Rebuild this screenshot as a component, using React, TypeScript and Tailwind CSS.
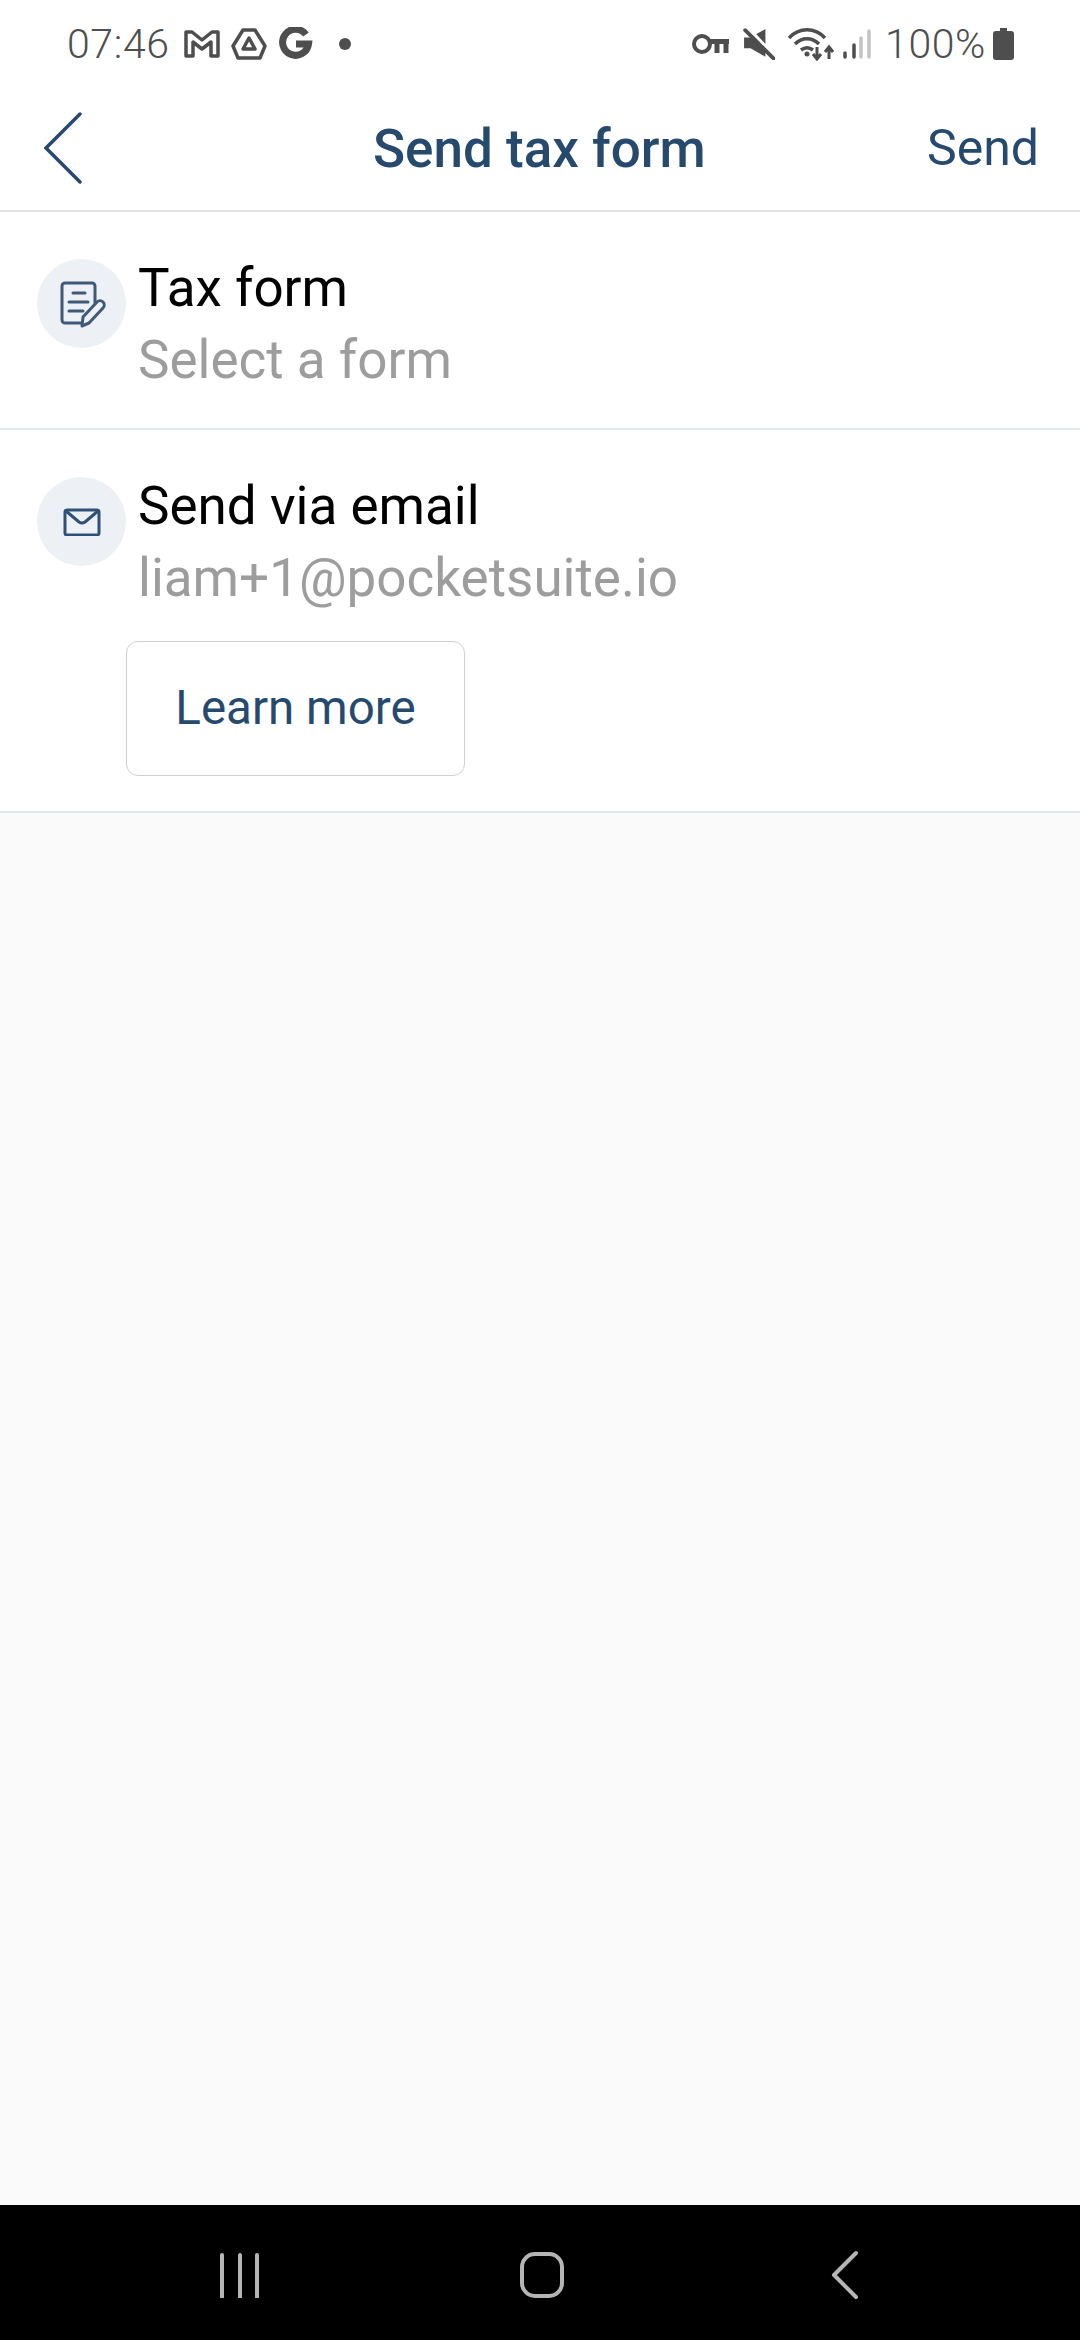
export default function App() {
  return (
    <div className="flex h-[2340px] w-[1080px] flex-col overflow-hidden bg-[#fafafa] font-['Roboto',sans-serif]">
      <div className="bg-white">
        <div className="flex h-[88px] items-center justify-between pl-[67px] pr-[66px] text-[#4e4e4e]">
          <div className="flex items-center">
            <span className="text-[41px] font-light leading-none tracking-[0.6px]">07:46</span>
            <svg className="ml-[14px]" width="36" height="30" viewBox="0 0 36 30" fill="none" stroke="#4e4e4e" strokeWidth="3.5" strokeLinejoin="round">
              <path d="M2 3h6l10 8 10-8h6v24h-7V13l-9 7-9-7v14H2z" />
            </svg>
            <svg className="ml-[11px]" width="36" height="32" viewBox="0 0 36 32" fill="none" stroke="#4e4e4e" strokeWidth="3.5" strokeLinejoin="round">
              <path d="M12 2h12l10 16-5 12H7L2 18z" />
              <path d="M18 10l6 11H12z" />
            </svg>
            <svg className="ml-[12px]" width="34" height="34" viewBox="0 0 34 34" fill="none" stroke="#4e4e4e" strokeWidth="7">
              <path d="M27 7.5A13 13 0 1 0 29.5 17H17" />
            </svg>
            <span className="ml-[26px] h-[12px] w-[12px] rounded-full bg-[#4e4e4e]" />
          </div>
          <div className="flex items-center">
            <svg width="38" height="22" viewBox="0 0 38 22" fill="none" stroke="#4e4e4e">
              <circle cx="10" cy="11" r="8" strokeWidth="4" />
              <path d="M17 8.500h20M25 8v12M34 8v12" strokeWidth="5" />
            </svg>
            <svg className="ml-[13px]" width="32" height="32" viewBox="0 0 30 30" fill="none">
              <path d="M1 9h6l14-8v26L7 19H1z" fill="#4e4e4e" />
              <path d="M6 1l24 26" stroke="#ffffff" strokeWidth="3" />
              <path d="M2 2l27 27" stroke="#4e4e4e" strokeWidth="3.5" strokeLinecap="round" />
            </svg>
            <svg className="ml-[13px]" width="46" height="34" viewBox="0 0 46 34" fill="none" stroke="#4e4e4e" strokeWidth="3.5">
              <path d="M1 11C11 0 27 0 37 11" />
              <path d="M7 17c7-7 17-7 24 0" />
              <path d="M13 23c4-3 8-3 12 0" />
              <circle cx="19" cy="27" r="2.500" fill="#4e4e4e" stroke="none" />
              <path d="M29 20v12M25 27l4 5 4-5M41 32V21M37 25l4-5 4 5" strokeWidth="3" />
            </svg>
            <svg className="ml-[9px]" width="28" height="30" viewBox="0 0 28 30" fill="none" strokeWidth="3.5" strokeLinecap="round">
              <path d="M2 24v4M11 16v12" stroke="#4e4e4e" />
              <path d="M18 9v19M26 2v26" stroke="#c4c4c4" />
            </svg>
            <span className="ml-[14px] text-[41px] font-light leading-none tracking-[0.6px]">100%</span>
            <svg className="ml-[7px]" width="21" height="32" viewBox="0 0 21 32" fill="#4e4e4e">
              <path d="M7 0h7v3h4a3 3 0 0 1 3 3v23a3 3 0 0 1-3 3H3a3 3 0 0 1-3-3V6a3 3 0 0 1 3-3h4z" />
            </svg>
          </div>
        </div>
        <div className="relative flex h-[124px] items-center justify-between border-b-2 border-[#e3e3e3] pl-[44px] pr-[41px] pb-[2px] text-[#264a6e]">
          <svg width="38" height="72" viewBox="0 0 38 72" fill="none" stroke="#264a6e" strokeWidth="3.500" strokeLinecap="round">
            <path d="M36 2L2 36l34 34" />
          </svg>
          <span className="absolute left-[373px] top-[32px] text-[53px] font-medium leading-[58px]">Send tax form</span>
          <span className="text-[50px] leading-[58px]">Send</span>
        </div>
      </div>

      <div className="flex h-[218px] gap-[12px] border-b-2 border-[#e2e7ea] bg-white pl-[37px] pt-[47px]">
        <div className="flex h-[89px] w-[89px] items-center justify-center rounded-full bg-[#edf1f5]">
          <svg width="48" height="48" viewBox="0 0 48 48" fill="none" stroke="#3f5a79" strokeWidth="3" strokeLinecap="round" strokeLinejoin="round">
            <path d="M23 43H7a3 3 0 0 1-3-3V6a3 3 0 0 1 3-3h27a3 3 0 0 1 3 3v17" />
            <path d="M15 13h12M11 22h19M11 31h14" />
            <path d="M24 46l1-9 14-15a4 4 0 0 1 6 6L31 43z" />
          </svg>
        </div>
        <div className="flex flex-col">
          <span className="text-[53px] leading-[58px] text-black">Tax form</span>
          <span className="mt-[14px] text-[53px] leading-[58px] text-[#9d9d9d]">Select a form</span>
        </div>
      </div>

      <div className="flex h-[383px] gap-[12px] border-b-2 border-[#e2e7ea] bg-white pl-[37px] pt-[47px]">
        <div className="flex h-[89px] w-[89px] shrink-0 items-center justify-center rounded-full bg-[#edf1f5]">
          <svg width="38" height="28" viewBox="0 0 38 28" fill="none" stroke="#2f5177" strokeWidth="3" strokeLinecap="round" strokeLinejoin="round">
            <rect x="2" y="2" width="34" height="25" rx="2" />
            <path d="M3 3l13 11q3 2 6 0L35 3" />
          </svg>
        </div>
        <div className="flex flex-col items-start">
          <span className="text-[53px] leading-[58px] text-black">Send via email</span>
          <span className="mt-[14px] text-[53px] leading-[58px] text-[#9d9d9d]">liam+1@pocketsuite.io</span>
          <div className="-ml-[12px] mt-[34px] flex h-[135px] w-[339px] items-center justify-center rounded-[12px] border border-[#d0d0d0] bg-white text-[47.500px] text-[#264a6e]">
            Learn more
          </div>
        </div>
      </div>

      <div className="flex-1" />

      <div className="relative h-[135px] bg-black">
        <svg className="absolute left-[219px] top-[47px]" width="42" height="46" viewBox="0 0 42 46" fill="none" stroke="#b5b5b5" strokeWidth="4" strokeLinecap="round">
          <path d="M3 3v42M21 3v42M38 3v42" />
        </svg>
        <svg className="absolute left-[519px] top-[46px]" width="46" height="48" viewBox="0 0 46 48" fill="none" stroke="#b5b5b5" strokeWidth="4">
          <rect x="3" y="3" width="40" height="42" rx="13" />
        </svg>
        <svg className="absolute left-[831px] top-[45px]" width="28" height="50" viewBox="0 0 28 50" fill="none" stroke="#b5b5b5" strokeWidth="4" strokeLinecap="round" strokeLinejoin="round">
          <path d="M25 3L3 25l22 22" />
        </svg>
      </div>
    </div>
  );
}
